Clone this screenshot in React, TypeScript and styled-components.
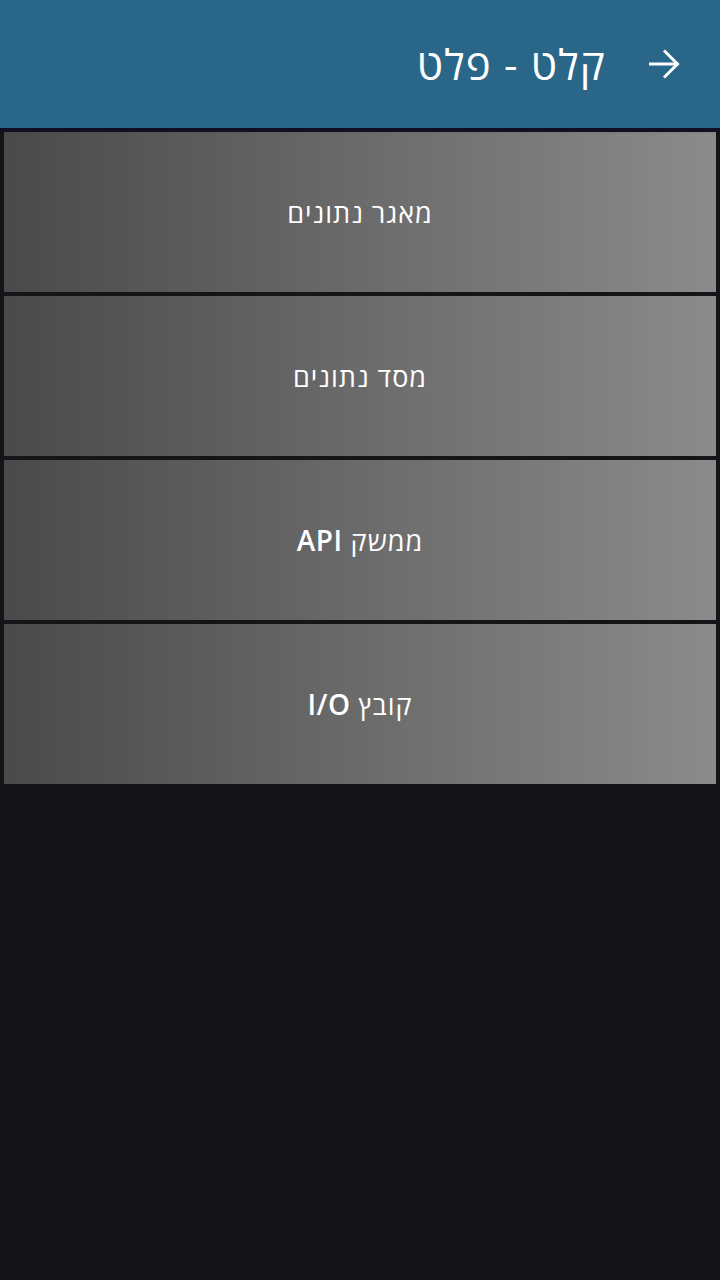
import React from "react";
import styled, { createGlobalStyle } from "styled-components";

const Global = createGlobalStyle`
  html, body { margin: 0; padding: 0; background: #151419; }
  body { font-family: "Open Sans", "DejaVu Sans", sans-serif; }
  #root { min-height: 1280px; background: #151419; }
`;

const Page = styled.div`
  direction: rtl;
  display: flex;
  flex-direction: column;
  min-height: 1280px;
  background: #151419;
`;

const Header = styled.header`
  height: 128px;
  background: #296688;
  display: flex;
  align-items: center;
  padding: 0 40px 0 0;
  gap: 42px;
  box-shadow: 0 2px 3px rgba(12, 14, 44, 0.9);
  position: relative;
  z-index: 1;
`;

const BackButton = styled.button`
  width: 32px;
  height: 32px;
  border: 0;
  padding: 0;
  background: transparent;
  display: flex;
  align-items: center;
  justify-content: center;
`;

const Title = styled.h1`
  margin: 0;
  font-family: "Open Sans", "DejaVu Sans", sans-serif;
  font-weight: 400;
  font-size: 42px;
  letter-spacing: 1.2px;
  color: #fff;
  line-height: 1;
`;

const List = styled.div`
  display: flex;
  flex-direction: column;
  gap: 4px;
  padding: 4px 4px 0;
`;

const Item = styled.div`
  height: 160px;
  display: flex;
  align-items: center;
  justify-content: center;
  background: linear-gradient(90deg, #4a4a4a 0%, #8b8b8b 100%);
  color: #fff;
  font-family: "Open Sans", "DejaVu Sans", sans-serif;
  font-size: 27px;
  letter-spacing: 1px;
`;

const Label = styled.span`
  white-space: pre;
`;

const Latin = styled.span`
  font-weight: 600;
  font-size: 28px;
  letter-spacing: 0.5px;
`;

const items: { he: string; latin?: string }[] = [
  { he: "מאגר נתונים" },
  { he: "מסד נתונים" },
  { he: "ממשק ", latin: "API" },
  { he: "קובץ ", latin: "I/O" },
];

export default function App() {
  return (
    <Page>
      <Global />
      <Header>
        <BackButton aria-label="back">
          <svg width="32" height="32" viewBox="0 0 32 32" fill="none" stroke="#fff" strokeWidth="3" strokeLinecap="butt" strokeLinejoin="miter">
            <path d="M1 16 H29.5 M16 2.5 L29.5 16 L16 29.5" />
          </svg>
        </BackButton>
        <Title>קלט - פלט</Title>
      </Header>
      <List>
        {items.map((t) => (
          <Item key={t.he + (t.latin ?? "")}>
            <Label>
              {t.he}
              {t.latin && <Latin>{t.latin}</Latin>}
            </Label>
          </Item>
        ))}
      </List>
    </Page>
  );
}
